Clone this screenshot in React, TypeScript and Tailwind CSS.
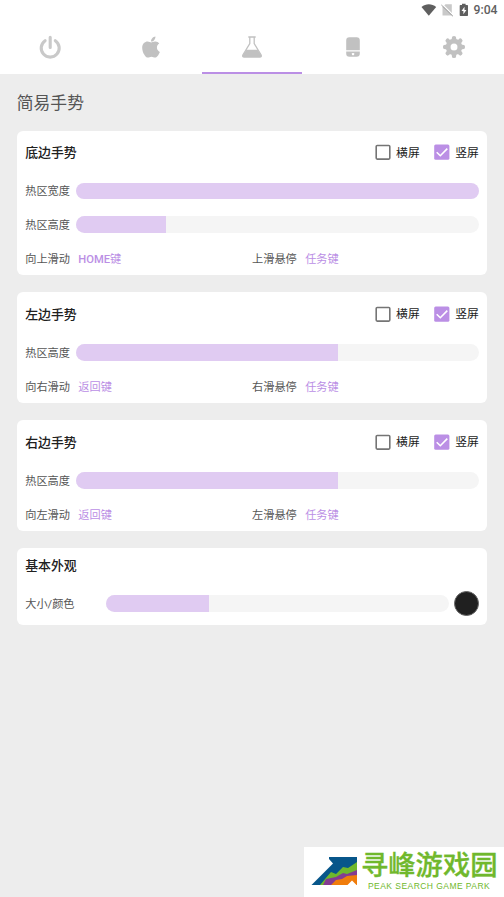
import React from "react";
import { FaApple } from "react-icons/fa";

function StatusBar() {
  return (
    <div className="relative h-5 w-full">
      <svg className="absolute left-[421px] top-[3px]" width="50" height="14" viewBox="0 0 50 14">
        <path d="M0.5 3.9C4.8 0.3 10.8 0.3 15.2 3.9L7.8 12.8Z" fill="#5f5f5f" />
        <path d="M24.500 1.300h6.300v11.200h-9.300V4.300z" fill="#c9c9c9" />
        <path d="M21 1l11 11" stroke="#fff" strokeWidth="1.300" />
        <path d="M20.400 2l11.500 11.200" stroke="#999999" strokeWidth="1" />
        <path d="M41 0.700h3.600v1.300h1.700q.7 0 .7.7v9.600q0 .7-.7.7h-6.900q-.7 0-.7-.7V2.700q0-.7.7-.7H41z" fill="#5f5f5f" />
        <path d="M43.500 3.700l-3 4.300h1.900v3.300l3-4.400h-1.900z" fill="#fff" />
      </svg>
      <span className="absolute right-[6.500px] top-[3px] text-[12.200px] leading-[15px] font-medium text-[#606060]">9:04</span>
    </div>
  );
}

function PowerIcon() {
  return (
    <svg width="24" height="24" viewBox="0 0 24 24" fill="none" stroke="#c9c9c9" strokeWidth="3.100" strokeLinecap="round">
      <path d="M12.200 2.300v10.200M7.100 5.700a9 9 0 1 0 10.200 0" />
    </svg>
  );
}

function FlaskIcon() {
  return (
    <svg width="24" height="24" viewBox="0 0 24 24">
      <path d="M8.300 2h7.400M9.800 2v6.500L3 19.700Q2 22 4.200 22h15.600Q22 22 21 19.700L14.200 8.500V2" fill="none" stroke="#c1c1c1" strokeWidth="1.300" />
      <path d="M6.400 14.800h11.200l3.600 5.200q.7 2-1.300 2H4.100q-2 0-1.300-2z" fill="#c1c1c1" />
    </svg>
  );
}

function PhoneIcon() {
  return (
    <svg width="24" height="24" viewBox="0 0 24 24" fill="#c1c1c1">
      <path d="M5.200 15.200V5.500Q5.200 2.300 8.400 2.300h7.200q3.200 0 3.200 3.200v9.700zM5.200 16.400h13.600v2.200q0 3.200-3.200 3.200H8.400q-3.200 0-3.200-3.200z" />
      <rect x="10.900" y="17.900" width="2.300" height="2.300" rx=".7" fill="#fff" />
    </svg>
  );
}

function GearIcon() {
  return (
    <svg width="24" height="24" viewBox="0 0 24 24">
      <g stroke="#c1c1c1" strokeWidth="4.400" strokeLinecap="round">
        <path d="M12 3.100v3M12 17.900v3M3.100 12h3M17.900 12h3M5.700 5.700l2 2M16.300 16.300l2 2M5.700 18.300l2-2M16.300 7.700l2-2" />
      </g>
      <circle cx="12" cy="12" r="5.900" fill="none" stroke="#c1c1c1" strokeWidth="4.800" />
    </svg>
  );
}

function Tabs() {
  const icons = [<PowerIcon />, <FaApple size={24} color="#c1c1c1" />, <FlaskIcon />, <PhoneIcon />, <GearIcon />];
  return (
    <div className="grid h-[54px] grid-cols-5">
      {icons.map((icon, i) => (
        <div key={i} className={`flex items-center justify-center border-b-2 pt-[2px] ${i === 2 ? "border-[#bb8fe5]" : "border-transparent"}`}>
          {icon}
        </div>
      ))}
    </div>
  );
}

function Check({ label, checked }: { label: string; checked?: boolean }) {
  return (
    <span className="flex items-center gap-[5.500px] text-[11.800px] text-[#1c1c1c]">
      <svg width="16" height="16" viewBox="0 0 16 16" fill="none">
        {checked ? (
          <>
            <rect x=".2" y=".6" width="15.200" height="15.200" rx="1.500" fill="#bb8fe5" />
            <path d="M2.700 8.200l3.600 3.500 7-7.100" stroke="#fff" strokeWidth="1.600" />
          </>
        ) : (
          <rect x="1.200" y="1.500" width="13.600" height="13.600" rx="1" stroke="#757575" strokeWidth="1.600" />
        )}
      </svg>
      <span className="pt-[2.500px]">{label}</span>
    </span>
  );
}

function Bar({ value }: { value: number }) {
  return (
    <div className="h-[16.800px] flex-1 overflow-hidden rounded-full bg-[#f5f5f5]">
      <div className="h-full bg-[#e0cbf2]" style={{ width: `${value}%` }} />
    </div>
  );
}

function SliderRow({ label, value }: { label: string; value: number }) {
  return (
    <div className="flex h-[33.600px] items-center">
      <span className="w-[50.500px] pt-[3.500px]">{label}</span>
      <Bar value={value} />
    </div>
  );
}

interface Gesture {
  title: string;
  sliders: [string, number][];
  actions: [string, string][];
}

const gestures: Gesture[] = [
  { title: "底边手势", sliders: [["热区宽度", 100], ["热区高度", 22.400]], actions: [["向上滑动", "HOME键"], ["上滑悬停", "任务键"]] },
  { title: "左边手势", sliders: [["热区高度", 65]], actions: [["向右滑动", "返回键"], ["右滑悬停", "任务键"]] },
  { title: "右边手势", sliders: [["热区高度", 65]], actions: [["向左滑动", "返回键"], ["左滑悬停", "任务键"]] },
];

function ActionName({ name }: { name: string }) {
  const latin = name.replace(/[^A-Z]/g, "");
  return (
    <span className="text-[#bb8fe5]">
      {latin && <span className="font-medium">{latin}</span>}
      {name.slice(latin.length)}
    </span>
  );
}

function GestureCard({ title, sliders, actions }: Gesture) {
  return (
    <section className="rounded-[6px] bg-white px-[8.400px]">
      <div className="flex h-[43.700px] items-center">
        <h2 className="flex-1 pt-px text-[12.900px] font-medium text-[#202020]">{title}</h2>
        <div className="flex gap-[14px]">
          <Check label="横屏" />
          <Check label="竖屏" checked />
        </div>
      </div>
      {sliders.map(([label, value]) => (
        <SliderRow key={label} label={label} value={value} />
      ))}
      <div className="grid h-[33.600px] grid-cols-2 items-center pt-[4.500px]">
        {actions.map(([label, action]) => (
          <div key={label} className="flex gap-[8.400px]">
            <span>{label}</span>
            <ActionName name={action} />
          </div>
        ))}
      </div>
    </section>
  );
}

function Watermark() {
  return (
    <div className="fixed bottom-0 right-0 flex h-[50px] w-[200px] bg-white">
      <svg className="ml-[7px] mt-[9px] shrink-0" width="51" height="30" viewBox="0 0 51 30">
        <path d="M.5 29L22 7.500L18 3V1H46V29Z" fill="#07568a" />
        <path d="M9 29L20 16L25 18L32 11L37 12L46 6V29Z" fill="#6fb82c" />
        <path d="M12 29L15 23L25 21L32 17L36 18L46 14V29Z" fill="#843b91" />
        <path d="M20 29L25 24L31 23L36 20L46 19V29Z" fill="#f07c0b" />
        <path d="M36 29.500L41 24.500L46 29.500Z" fill="#fff" />
      </svg>
      <div className="pt-[5px] text-[#70b82c]">
        <div className="-ml-px whitespace-nowrap text-[27.300px] font-medium leading-[29px] [-webkit-text-stroke:0.300px_#70b82c]">寻峰游戏园</div>
        <div className="ml-[6px] whitespace-nowrap font-['Liberation_Sans',sans-serif] text-[8.500px] leading-[10px] tracking-[0.450px]">PEAK SEARCH GAME PARK</div>
      </div>
    </div>
  );
}

export default function App() {
  return (
    <div className="h-screen overflow-hidden bg-[#ededed] font-[Roboto,'Noto_Sans_CJK_SC',sans-serif] text-[11.200px] text-[#555555]">
      <header className="bg-white">
        <StatusBar />
        <Tabs />
      </header>
      <main className="px-[16.800px]">
        <h1 className="flex h-[56.600px] items-center pt-[2.500px] text-[16.800px] text-[#555555]">简易手势</h1>
        <div className="flex flex-col gap-[17px]">
          {gestures.map((g) => (
            <GestureCard key={g.title} {...g} />
          ))}
          <section className="h-[77px] rounded-[6px] bg-white px-[8.400px]">
            <h2 className="flex h-[34px] items-center pt-px text-[12.900px] font-medium text-[#202020]">基本外观</h2>
            <div className="flex h-[43px] items-center">
              <span className="w-[80.500px] pt-[4px]">大小/颜色</span>
              <Bar value={30} />
              <div className="ml-[5px] h-[25px] w-[25px] rounded-full border border-[#666666] bg-[#202020]" />
            </div>
          </section>
        </div>
      </main>
      <Watermark />
    </div>
  );
}
